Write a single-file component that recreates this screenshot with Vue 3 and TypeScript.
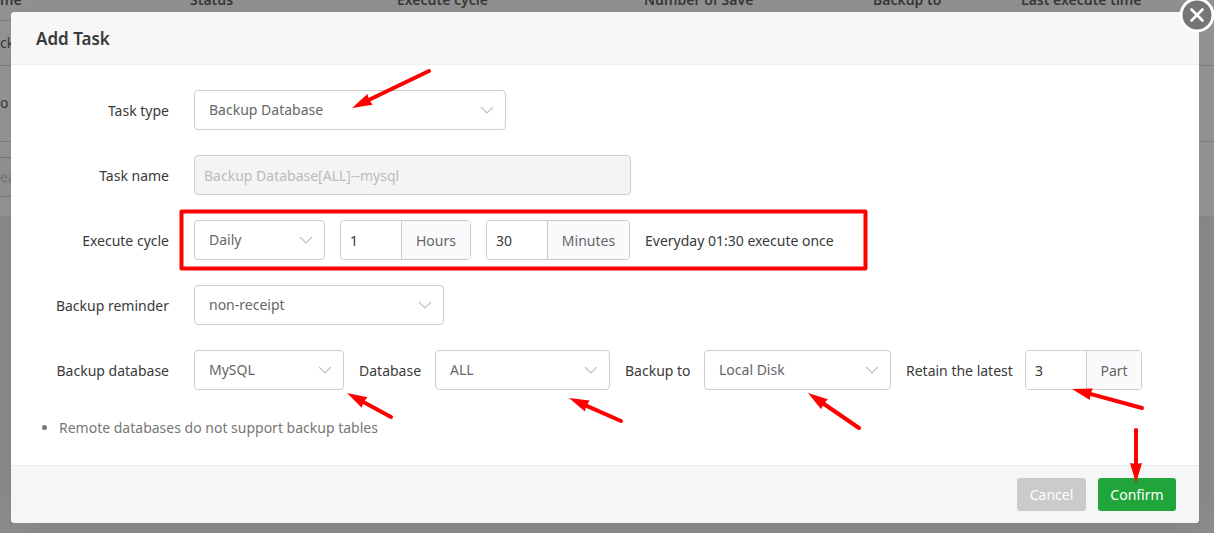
<script setup lang="ts">
import { ref } from 'vue'

interface Arrow {
  tail: [number, number]
  tip: [number, number]
}

const arrows: Arrow[] = [
  { tail: [429, 71], tip: [352, 108] },
  { tail: [391, 417], tip: [347, 393] },
  { tail: [621, 421], tip: [569, 398] },
  { tail: [859, 428], tip: [808, 393] },
  { tail: [1142, 408], tip: [1072, 389] },
  { tail: [1136, 430], tip: [1136, 483] },
]

function headPoints({ tail, tip }: Arrow): string {
  const dx = tail[0] - tip[0]
  const dy = tail[1] - tip[1]
  const len = Math.hypot(dx, dy)
  const ux = dx / len
  const uy = dy / len
  const along = (d: number, side: number) =>
    `${tip[0] + ux * d - uy * side},${tip[1] + uy * d + ux * side}`
  return [along(0, 0), along(20, 6), along(19, 0), along(20, -6)].join(' ')
}

function shaft({ tail, tip }: Arrow): string {
  const dx = tail[0] - tip[0]
  const dy = tail[1] - tip[1]
  const len = Math.hypot(dx, dy)
  return `M${tail[0]} ${tail[1]}L${tip[0] + (dx / len) * 15} ${tip[1] + (dy / len) * 15}`
}

const columns = ['me', 'Status', 'Execute cycle', 'Number of Save', 'Backup to', 'Last execute time']

const taskType = ref('Backup Database')
const taskName = ref('Backup Database[ALL]--mysql')
const cycle = ref('Daily')
const hours = ref('1')
const minutes = ref('30')
const reminder = ref('non-receipt')
const engine = ref('MySQL')
const database = ref('ALL')
const target = ref('Local Disk')
const retain = ref('3')
</script>

<template>
  <div class="page">
    <div class="backdrop" aria-hidden="true">
      <table class="tasks">
        <thead>
          <tr><th v-for="c in columns" :key="c">{{ c }}</th></tr>
        </thead>
        <tbody>
          <tr class="row-task"><td colspan="6">ck</td></tr>
          <tr class="row-note"><td colspan="6">o<span class="warn"> r</span></td></tr>
        </tbody>
      </table>
      <div class="search"><input type="text" placeholder="ea" aria-label="Search" tabindex="-1" /></div>
    </div>

    <form class="modal" role="dialog" aria-labelledby="title" @submit.prevent>
      <button class="close" type="button" aria-label="Close">
        <svg width="36" height="36" viewBox="0 0 36 36">
          <circle cx="18" cy="18" r="16" fill="#757575" stroke="#fff" stroke-width="3" />
          <path d="M12.5 12.5l11 11M23.5 12.5l-11 11" stroke="#fff" stroke-width="2.6" stroke-linecap="round" />
        </svg>
      </button>
      <header class="head"><h1 id="title">Add Task</h1></header>

      <div class="body">
        <div class="line">
          <label class="name" for="type">Task type</label>
          <span class="select w-type">
            <select id="type" v-model="taskType"><option>Backup Database</option></select>
            <svg class="chev" viewBox="0 0 14 8"><path d="M1 1l6 6 6-6" /></svg>
          </span>
        </div>

        <div class="line">
          <label class="name" for="tname">Task name</label>
          <input id="tname" v-model="taskName" class="text w-name" type="text" disabled />
        </div>

        <div class="line">
          <label class="name" for="cycle">Execute cycle</label>
          <div class="fields">
            <span class="select w-cycle">
              <select id="cycle" v-model="cycle"><option>Daily</option></select>
              <svg class="chev" viewBox="0 0 14 8"><path d="M1 1l6 6 6-6" /></svg>
            </span>
            <span class="group w-hours">
              <input id="hours" v-model="hours" type="text" />
              <label for="hours">Hours</label>
            </span>
            <span class="group w-minutes">
              <input id="minutes" v-model="minutes" type="text" />
              <label for="minutes">Minutes</label>
            </span>
            <span class="summary">Everyday 01:30 execute once</span>
          </div>
        </div>

        <div class="line">
          <label class="name" for="reminder">Backup reminder</label>
          <span class="select w-reminder">
            <select id="reminder" v-model="reminder"><option>non-receipt</option></select>
            <svg class="chev" viewBox="0 0 14 8"><path d="M1 1l6 6 6-6" /></svg>
          </span>
        </div>

        <div class="line">
          <label class="name" for="engine">Backup database</label>
          <div class="targets">
            <span class="select">
              <select id="engine" v-model="engine"><option>MySQL</option></select>
              <svg class="chev" viewBox="0 0 14 8"><path d="M1 1l6 6 6-6" /></svg>
            </span>
            <label for="database">Database</label>
            <span class="select">
              <select id="database" v-model="database"><option>ALL</option></select>
              <svg class="chev" viewBox="0 0 14 8"><path d="M1 1l6 6 6-6" /></svg>
            </span>
            <label for="target">Backup to</label>
            <span class="select">
              <select id="target" v-model="target"><option>Local Disk</option></select>
              <svg class="chev" viewBox="0 0 14 8"><path d="M1 1l6 6 6-6" /></svg>
            </span>
            <label for="retain">Retain the latest</label>
            <span class="group">
              <input id="retain" v-model="retain" type="text" />
              <label for="retain">Part</label>
            </span>
          </div>
        </div>

        <ul class="notes"><li>Remote databases do not support backup tables</li></ul>
      </div>

      <footer class="foot">
        <button class="btn cancel" type="button">Cancel</button>
        <button class="btn confirm" type="submit">Confirm</button>
      </footer>
    </form>

    <svg class="marks" width="1214" height="533" viewBox="0 0 1214 533" aria-hidden="true">
      <rect x="181.5" y="211.5" width="684" height="57" fill="none" stroke="#f00" stroke-width="4" stroke-linejoin="round" />
      <g v-for="(a, i) in arrows" :key="i">
        <path :d="shaft(a)" stroke="#f00" stroke-width="4" stroke-linecap="round" />
        <polygon :points="headPoints(a)" fill="#f00" />
      </g>
    </svg>
  </div>
</template>

<style>
body {
  margin: 0;
  background: #8d8d8d;
}
</style>

<style scoped>
.page,
.page * {
  box-sizing: border-box;
}
.page {
  position: relative;
  min-height: 100vh;
  padding: 12px 15px 10px 11px;
  overflow: hidden;
  font: 14px/20px "Segoe UI", "Noto Sans", "Open Sans", sans-serif;
  color: #3a3a3a;
}
input,
select,
button {
  font: inherit;
}
.backdrop {
  position: absolute;
  top: -26px;
  left: 0;
  width: 100%;
  height: 243px;
  background: #979797;
  border-bottom: 1px solid #888;
}
.tasks {
  width: 100%;
  border-collapse: collapse;
  table-layout: fixed;
}
.tasks th {
  height: 46px;
  padding: 0 0 10px;
  background: #949494;
  border-bottom: 1px solid #808080;
  font-weight: 600;
  line-height: 20px;
  text-align: left;
  vertical-align: bottom;
  white-space: nowrap;
}
.tasks th:nth-child(1) { width: 190px; }
.tasks th:nth-child(2) { width: 207px; }
.tasks th:nth-child(3) { width: 247px; }
.tasks th:nth-child(4) { width: 229px; }
.tasks th:nth-child(5) { width: 148px; }
.tasks td {
  padding: 0;
  border-bottom: 1px solid #808080;
}
.row-task { height: 45px; }
.row-note { height: 76px; }
.warn { color: #6b2f1c; }
.search {
  padding-top: 15px;
}
.search input {
  display: block;
  width: 100px;
  height: 40px;
  padding: 0;
  background: #949494;
  border: solid #777;
  border-width: 1px 0;
}
.search input::placeholder { color: #757575; }

.modal {
  position: relative;
  background: #fff;
  border-radius: 4px;
  box-shadow: 1px 1px 50px rgba(0, 0, 0, 0.1);
}
.close {
  position: absolute;
  top: -15px;
  right: -16px;
  width: 36px;
  height: 36px;
  padding: 0;
  background: none;
  border: 0;
}
.close svg { display: block; }
.head {
  display: flex;
  align-items: center;
  height: 53px;
  padding: 2px 25px 0;
  background: #f7f7f7;
  border-bottom: 1px solid #eee;
  border-radius: 4px 4px 0 0;
}
.head h1 {
  margin: 0;
  font-size: 17px;
  font-weight: 600;
  line-height: 24px;
}
.body {
  display: flex;
  flex-direction: column;
  gap: 25px;
  padding: 25px 0;
}
.line {
  display: grid;
  grid-template-columns: 158px 1fr;
  column-gap: 25px;
  align-items: center;
}
.name,
.summary,
.targets > label {
  padding-top: 2px;
}
.name {
  text-align: right;
  white-space: nowrap;
}
.fields {
  display: flex;
  align-items: center;
  gap: 15px;
}
.targets {
  display: grid;
  grid-template-columns: 150px 61px 175px 64px 187px 104px 117px;
  column-gap: 15px;
  align-items: center;
  white-space: nowrap;
}
.select {
  display: grid;
  align-items: center;
}
.select select,
.select .chev {
  grid-area: 1 / 1;
}
.select select {
  width: 100%;
  height: 40px;
  padding: 0 40px 0 14px;
  appearance: none;
  background: #fff;
  border: 1px solid #ccc;
  border-radius: 4px;
  color: #666;
}
.chev {
  justify-self: end;
  width: 14px;
  height: 8px;
  margin-right: 12px;
  pointer-events: none;
  fill: none;
  stroke: #c0c0c0;
  stroke-width: 1.2;
}
.w-type { width: 312px; }
.w-name { width: 437px; }
.w-cycle { width: 131px; }
.w-hours { width: 131px; }
.w-minutes { width: 144px; }
.w-reminder { width: 250px; }
.text {
  height: 40px;
  padding: 0 9px;
  background: #f4f4f4;
  border: 1px solid #ccc;
  border-radius: 4px;
  color: #bbb;
}
.group {
  display: flex;
  height: 40px;
  border: 1px solid #ccc;
  border-radius: 4px;
  overflow: hidden;
}
.group input {
  width: 60px;
  padding: 2px 9px 0;
  background: #fff;
  border: 0;
  color: #3a3a3a;
}
.group label {
  display: flex;
  flex: 1;
  align-items: center;
  justify-content: center;
  padding-top: 2px;
  background: #fafafc;
  border-left: 1px solid #ccc;
  color: #666;
}
.notes {
  margin: 0;
  padding: 3px 0 2px 48px;
  color: #777;
}
.foot {
  display: flex;
  align-items: center;
  justify-content: flex-end;
  gap: 12px;
  height: 58px;
  padding: 0 23px;
  background: #f5f7f7;
  border-top: 1px solid #ebeeee;
  border-radius: 0 0 4px 4px;
}
.btn {
  height: 33px;
  padding: 0;
  border: 0;
  border-radius: 3px;
  color: #fff;
}
.cancel {
  width: 69px;
  background: #cbcbcb;
}
.confirm {
  width: 78px;
  background: #20a53a;
}
.marks {
  position: absolute;
  top: 0;
  left: 0;
  pointer-events: none;
}
</style>
